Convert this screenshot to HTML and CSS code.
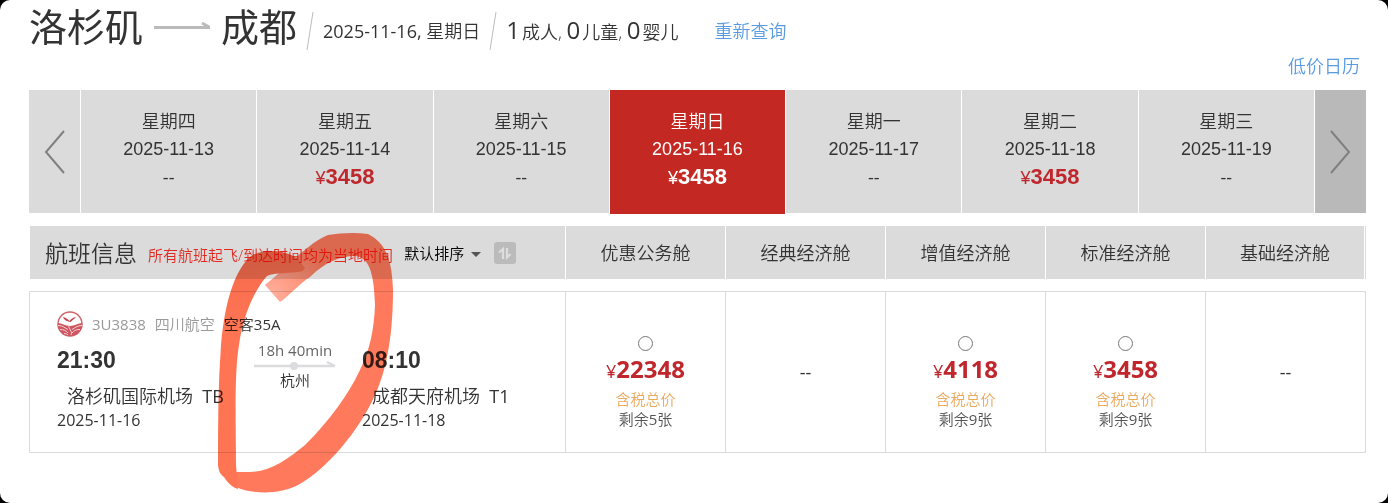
FILE: index.html
```
<!DOCTYPE html>
<html lang="zh-CN">
<head>
    <meta charset="UTF-8">
    <meta name="viewport" content="width=device-width, initial-scale=1">
    <title>洛杉矶 - 成都 航班查询</title>
    <link rel="stylesheet" href="styles.css">
</head>
<body>
    <header class="search-info">
        <h1 class="route">
            <span>洛杉矶</span>
            <svg class="route-arrow" viewBox="0 0 56 8"><path d="M0 5.500h56M48 1l7 4" fill="none" stroke="#bbb" stroke-width="3"/></svg>
            <span>成都</span>
        </h1>
        <svg class="slash" viewBox="0 0 8 38"><path d="M7 0L1 38" stroke="#bbb" fill="none"/></svg>
        <span class="date"><span class="num">2025-11-16,</span> 星期日</span>
        <svg class="slash" viewBox="0 0 8 38"><path d="M7 0L1 38" stroke="#bbb" fill="none"/></svg>
        <span class="people"><b>1</b>成人, <b>0</b>儿童, <b>0</b>婴儿</span>
        <a class="link" href="#">重新查询</a>
    </header>
    <div class="calendar"><a class="link" href="#">低价日历</a></div>

    <!-- 日期 -->
    <nav class="days">
        <button class="page-btn" aria-label="前一周"><svg viewBox="0 0 22 46"><path d="M20 2L2 23l18 21"/></svg></button>
        <button class="day"><span>星期四</span><span class="day-date">2025-11-13</span><span class="num">--</span></button>
        <button class="day"><span>星期五</span><span class="day-date">2025-11-14</span><span class="day-price">¥<b>3458</b></span></button>
        <button class="day"><span>星期六</span><span class="day-date">2025-11-15</span><span class="num">--</span></button>
        <button class="day active"><span>星期日</span><span class="day-date">2025-11-16</span><span class="day-price">¥<b>3458</b></span></button>
        <button class="day"><span>星期一</span><span class="day-date">2025-11-17</span><span class="num">--</span></button>
        <button class="day"><span>星期二</span><span class="day-date">2025-11-18</span><span class="day-price">¥<b>3458</b></span></button>
        <button class="day"><span>星期三</span><span class="day-date">2025-11-19</span><span class="num">--</span></button>
        <button class="page-btn next" aria-label="后一周"><svg viewBox="0 0 22 46"><path d="M2 2l18 21L2 44"/></svg></button>
    </nav>

    <!-- 航班 -->
    <main class="flights">
        <div class="row head">
            <div class="head-info">
                <h2>航班信息</h2>
                <span class="tip">所有航班起飞/到达时间均为当地时间</span>
                <button class="sort">默认排序 <i class="caret"></i></button>
                <button class="order" aria-label="切换排序"><svg viewBox="0 0 22 22"><path d="M5 10.500L9 7v10M13 6v9.500l3.500-3.500" fill="none" stroke="#dedede" stroke-width="2.200"/></svg></button>
            </div>
            <div class="cabin-name">优惠公务舱</div>
            <div class="cabin-name">经典经济舱</div>
            <div class="cabin-name">增值经济舱</div>
            <div class="cabin-name">标准经济舱</div>
            <div class="cabin-name last">基础经济舱</div>
        </div>
        <div class="row flight">
            <div class="flight-info">
                <div class="airline">
                    <svg class="logo" viewBox="0 0 26 26">
                        <circle cx="13" cy="13" r="12" fill="#fff" stroke="#d0646c" stroke-width="1.500"/>
                        <path d="M6 6c2.500.5 4.500 2 6.500 4 1.500-2 3.500-3.500 6.500-4-1.500 1.500-3 3-5.500 5-3-.5-6-1.500-7.500-5z" fill="#c9434d"/>
                        <path d="M1 12c4 0 7 3 12 3S21 12 25 12c1 7-5 13-12 13S0 19 1 12z" fill="#cf5660"/>
                        <path d="M1 14.500c5 0 7 2.500 10 4M25 14.500c-5 0-7 2.500-10 4M3 18.500c4 0 6 1 8 3.500M23 18.500c-4 0-6 1-8 3.500M7 22.500c2 0 3 .5 4 1.500M12 14c-1 4 4 6 2 10" fill="none" stroke="#f4d3d5" stroke-width="1"/>
                    </svg>
                    <span class="num">3U3838</span>
                    <span>四川航空</span>
                    <span class="plane">空客<span class="num">35A</span></span>
                </div>
                <div class="trip">
                    <div class="stop">
                        <strong>21:30</strong>
                        <span class="airport">洛杉矶国际机场&nbsp; <span class="num">TB</span></span>
                        <span class="stop-date num">2025-11-16</span>
                    </div>
                    <div class="transfer">
                        <span class="duration num">18h 40min</span>
                        <svg viewBox="0 0 82 10"><path d="M0 6h81M73 2l8 4" fill="none" stroke="#dcdcde" stroke-width="2.500"/><circle cx="40" cy="6" r="4" fill="#dcdcde"/></svg>
                        <span>杭州</span>
                    </div>
                    <div class="stop">
                        <strong>08:10</strong>
                        <span class="airport">成都天府机场&nbsp; <span class="num">T1</span></span>
                        <span class="stop-date num">2025-11-18</span>
                    </div>
                </div>
            </div>
            <label class="cabin">
                <input type="radio" name="cabin">
                <span class="price">¥<b>22348</b></span>
                <span class="tax">含税总价</span>
                <span class="left">剩余<span class="num">5</span>张</span>
            </label>
            <div class="cabin empty">--</div>
            <label class="cabin">
                <input type="radio" name="cabin">
                <span class="price">¥<b>4118</b></span>
                <span class="tax">含税总价</span>
                <span class="left">剩余<span class="num">9</span>张</span>
            </label>
            <label class="cabin">
                <input type="radio" name="cabin">
                <span class="price">¥<b>3458</b></span>
                <span class="tax">含税总价</span>
                <span class="left">剩余<span class="num">9</span>张</span>
            </label>
            <div class="cabin empty">--</div>
        </div>
        <!-- 手绘标记 -->
        <svg class="marker" viewBox="0 0 190 270">
            <defs>
                <radialGradient id="ink" gradientUnits="userSpaceOnUse" cx="62" cy="70" r="60">
                    <stop offset="0" stop-color="#ff7a5c" stop-opacity=".6"/>
                    <stop offset="1" stop-color="#ff7a5c"/>
                </radialGradient>
                <linearGradient id="tail" x1="0" y1="0" x2="0" y2="1">
                    <stop offset="0" stop-color="#f46a4c"/>
                    <stop offset=".3" stop-color="#ff7453"/>
                    <stop offset="1" stop-color="#ff7453"/>
                </linearGradient>
            </defs>
            <path fill="url(#ink)" d="M70 77C80 70 90 58 100 52C115 37 130 31 145 31C158 32 164 45 165 80C164 105 160 125 149 147C138 170 120 195 95 220C78 234 60 247 40 247L26 247L26 262C40 269 70 270 88 260C115 246 150 205 165 170C178 142 183 105 183 65C182 35 176 18 158 9C145 7 130 8 118 10C98 18 80 40 55 60Z"/>
            <path fill="url(#tail)" d="M95 43L88 34C75 24 52 24 41 31C25 45 15 75 11 120C8 160 8 200 8 240C9 247 10 249 14 252C18 258 22 262 28 264L26 240C26 200 24 150 29 120C33 92 43 67 57 51C65 47 80 49 93 46Z"/>
        </svg>
    </main>
</body>
</html>
```
FILE: styles.css
```
* {
    box-sizing: border-box;
}

html {
    background-color: #000;
}

body {
    min-height: 100vh;
    margin: 0;
    padding: 0 22px 0 29px;
    border-radius: 10px;
    background-color: #fff;
    color: #333;
    font-family: "Open Sans", "Noto Sans CJK SC", sans-serif;
    font-size: 15px;
    font-weight: 350;
    line-height: 20px;
}

button {
    margin: 0;
    padding: 0;
    border: none;
    color: inherit;
    font: inherit;
    cursor: pointer;
}

b, strong {
    font-weight: 700;
}

h1, h2 {
    margin: 0;
    font-weight: 350;
}

.num {
    font-weight: 400;
}

.link {
    color: #5a9be0;
    font-size: 18px;
    text-decoration: none;
}

/* search */
.search-info {
    display: flex;
    align-items: center;
    height: 56px;
    padding-top: 6px;
    font-size: 18px;
}

.route {
    display: flex;
    align-items: center;
    gap: 11px;
    padding-bottom: 10px;
    font-size: 38px;
    font-weight: 400;
    line-height: 42px;
}

.route-arrow {
    width: 56px;
    height: 8px;
}

.slash {
    width: 8px;
    height: 38px;
    margin: 0 9px;
}

.people b {
    margin-right: 2px;
    font-size: 24px;
    font-weight: 400;
}

.search-info .link {
    margin-left: 36px;
}

.calendar {
    height: 34px;
    padding-right: 6px;
    text-align: right;
}

/* days */
.days {
    display: flex;
    gap: 1px;
    height: 123px;
}

.page-btn {
    width: 51px;
    background-color: #dbdbdb;
}

.page-btn svg {
    display: block;
    width: 22px;
    height: 46px;
    margin: auto;
    fill: none;
    stroke: #808080;
    stroke-width: 2;
}

.page-btn.next {
    background-color: #b9b9b9;
}

.day {
    display: flex;
    flex: 1;
    flex-direction: column;
    align-items: center;
    padding-top: 17px;
    background-color: #dbdbdb;
    font-size: 18px;
    line-height: 28px;
}

.day-date, .day-price {
    font-family: "Liberation Sans", Arial, sans-serif;
}

.day-price {
    color: #c0272d;
}

.day-price b {
    font-size: 22px;
}

.day.active {
    height: 124px;
    background-color: #c42822;
    color: #fff;
}

.active .day-price {
    color: #fff;
}

/* flights */
.flights {
    position: relative;
    padding-top: 13px;
}

.row {
    display: grid;
    grid-template-columns: 535fr repeat(5, 160fr);
}

.head {
    height: 53px;
    margin-bottom: 12px;
    padding-right: 1px;
    border-left: 1px solid #fff;
    background-color: #dbdbdb;
}

.head-info {
    display: flex;
    align-items: center;
    padding-left: 15px;
    white-space: nowrap;
}

h2 {
    font-size: 23px;
}

.tip {
    margin-left: 11px;
    padding-top: 4px;
    color: #e02a20;
}

.sort {
    margin-left: 11px;
    background: none;
    color: #000;
}

.caret {
    display: inline-block;
    margin-left: 3px;
    border: 5px solid transparent;
    border-top-color: #555;
    border-bottom: 0;
    vertical-align: middle;
}

.order {
    width: 22px;
    height: 22px;
    margin-left: 13px;
    border-radius: 3px;
    background-color: #bbb;
}

.order svg {
    display: block;
}

.cabin-name {
    border-left: 1px solid #fff;
    font-size: 18px;
    line-height: 54px;
    text-align: center;
}

.cabin-name.last {
    border-right: 1px solid #fff;
}

.flight {
    height: 162px;
    border: 1px solid #dbdbdb;
}

.flight-info {
    padding: 19px 0 0 27px;
}

.airline {
    display: flex;
    align-items: center;
    gap: 9px;
    height: 26px;
    color: #999;
}

.logo {
    width: 26px;
    height: 26px;
}

.plane {
    color: #333;
}

.trip {
    display: flex;
    padding-top: 3px;
}

.stop {
    display: flex;
    flex-direction: column;
    width: 197px;
    padding-top: 6px;
    white-space: nowrap;
}

.stop strong {
    font-family: "Liberation Sans", Arial, sans-serif;
    font-size: 23px;
    line-height: 28px;
}

.airport {
    padding: 12px 0 4px 10px;
    font-size: 18px;
    line-height: 20px;
}

.stop-date {
    font-size: 16px;
}

.transfer {
    display: flex;
    flex-direction: column;
    align-items: center;
    width: 82px;
    margin-right: 26px;
    white-space: nowrap;
}

.transfer svg {
    width: 82px;
    height: 10px;
}

.duration {
    color: #666;
}

.cabin {
    display: flex;
    flex-direction: column;
    align-items: center;
    justify-content: center;
    border-left: 1px solid #dbdbdb;
}

.cabin.empty {
    font-size: 18px;
    font-weight: 400;
}

.cabin input {
    width: 15px;
    height: 15px;
    margin: 20px 0 0;
}

.price {
    color: #c0272d;
    font-size: 18px;
    font-weight: 400;
    line-height: 36px;
}

.price b {
    font-size: 24px;
}

.tax {
    color: #eaa95c;
}

.left {
    color: #555;
}

/* hand-drawn circle over the table */
.marker {
    position: absolute;
    top: 12px;
    left: 181px;
    width: 190px;
    height: 270px;
    mix-blend-mode: multiply;
    pointer-events: none;
}
```
